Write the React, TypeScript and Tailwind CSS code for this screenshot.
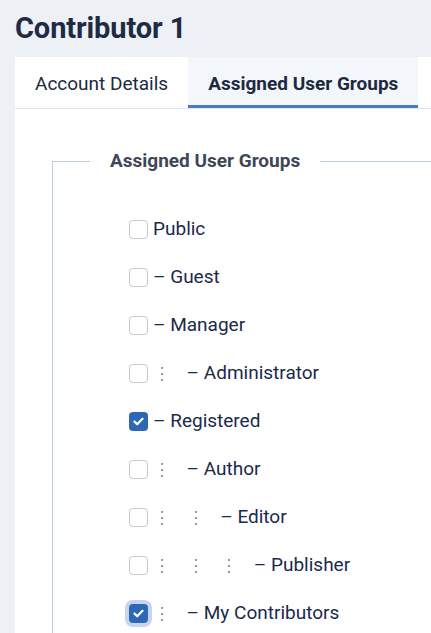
import React, { useState } from "react";

type Group = { name: string; level: number; checked?: boolean; focused?: boolean };

const groups: Group[] = [
  { name: "Public", level: 0 },
  { name: "Guest", level: 1 },
  { name: "Manager", level: 1 },
  { name: "Administrator", level: 2 },
  { name: "Registered", level: 1, checked: true },
  { name: "Author", level: 2 },
  { name: "Editor", level: 3 },
  { name: "Publisher", level: 4 },
  { name: "My Contributors", level: 2, checked: true, focused: true },
];

function Dots() {
  return (
    <span className="flex w-[33.6px] shrink-0 pl-[8px]">
      <span className="flex flex-col gap-[4px] pt-[1px]">
        <span className="block w-[2px] h-[2px] bg-[#9a9a9a]" />
        <span className="block w-[2px] h-[2px] bg-[#9a9a9a]" />
        <span className="block w-[2px] h-[2px] bg-[#9a9a9a]" />
      </span>
    </span>
  );
}

function Checkbox({ checked, focused, onClick }: { checked: boolean; focused?: boolean; onClick: () => void }) {
  return (
    <button
      onClick={onClick}
      className={
        "flex items-center justify-center w-[19px] h-[19px] rounded-[4px] shrink-0 " +
        (checked ? "bg-[#2c68b6] " : "bg-white border border-[#c9c9c9] ") +
        (focused ? "ring-4 ring-[#c4d5ed]" : "")
      }
    >
      {checked && (
        <svg width="11" height="9" viewBox="0 0 11 9" fill="none">
          <path d="M1.5 4.6 L4.2 7.2 L9.5 1.8" stroke="white" strokeWidth="2.2" strokeLinecap="round" strokeLinejoin="round" />
        </svg>
      )}
    </button>
  );
}

export default function App() {
  const [checked, setChecked] = useState<boolean[]>(groups.map((g) => !!g.checked));
  const [tab, setTab] = useState(1);

  return (
    <div className="h-screen bg-[#edf1f6] font-['Roboto',sans-serif] overflow-hidden">
      <h1 className="pl-[15px] pt-[9px] pb-[9px] text-[29px] leading-[39px] font-bold text-[#1f2b45] tracking-[-0.1px]">
        Contributor 1
      </h1>

      <div className="ml-[15px] bg-white min-h-[600px]">
        <div className="flex border-b border-[#dde5ef]">
          {["Account Details", "Assigned User Groups"].map((label, i) => (
            <button
              key={label}
              onClick={() => setTab(i)}
              className={
                "px-5 h-[51px] text-[19px] text-[#1c2a40] whitespace-nowrap border-b-[3px] pt-[7px] " +
                (tab === i ? "bg-[#f3f6fa] font-bold border-[#4a7dc0]" : "bg-white border-transparent")
              }
            >
              {label}
            </button>
          ))}
        </div>

        <div className="pt-[41px] pl-[37px]">
          <fieldset className="border-t border-l border-[#b7cbe1] pb-10">
            <legend className="ml-[37px] px-5 text-[19px] leading-[22px] font-bold text-[#3d4757]">
              Assigned User Groups
            </legend>
            <div className="pl-[76px] pt-[33px] flex flex-col">
              {groups.map((g, i) => (
                <div key={g.name} className="flex items-center h-[48px] text-[19px] text-[#1b2a4a]">
                  <Checkbox
                    checked={checked[i]}
                    focused={g.focused}
                    onClick={() => setChecked(checked.map((c, j) => (j === i ? !c : c)))}
                  />
                  <span className="w-[5px] shrink-0" />
                  {Array.from({ length: Math.max(g.level - 1, 0) }).map((_, k) => (
                    <Dots key={k} />
                  ))}
                  <span className="whitespace-nowrap">
                    {g.level > 0 ? "– " : ""}
                    {g.name}
                  </span>
                </div>
              ))}
            </div>
          </fieldset>
        </div>
      </div>
    </div>
  );
}
